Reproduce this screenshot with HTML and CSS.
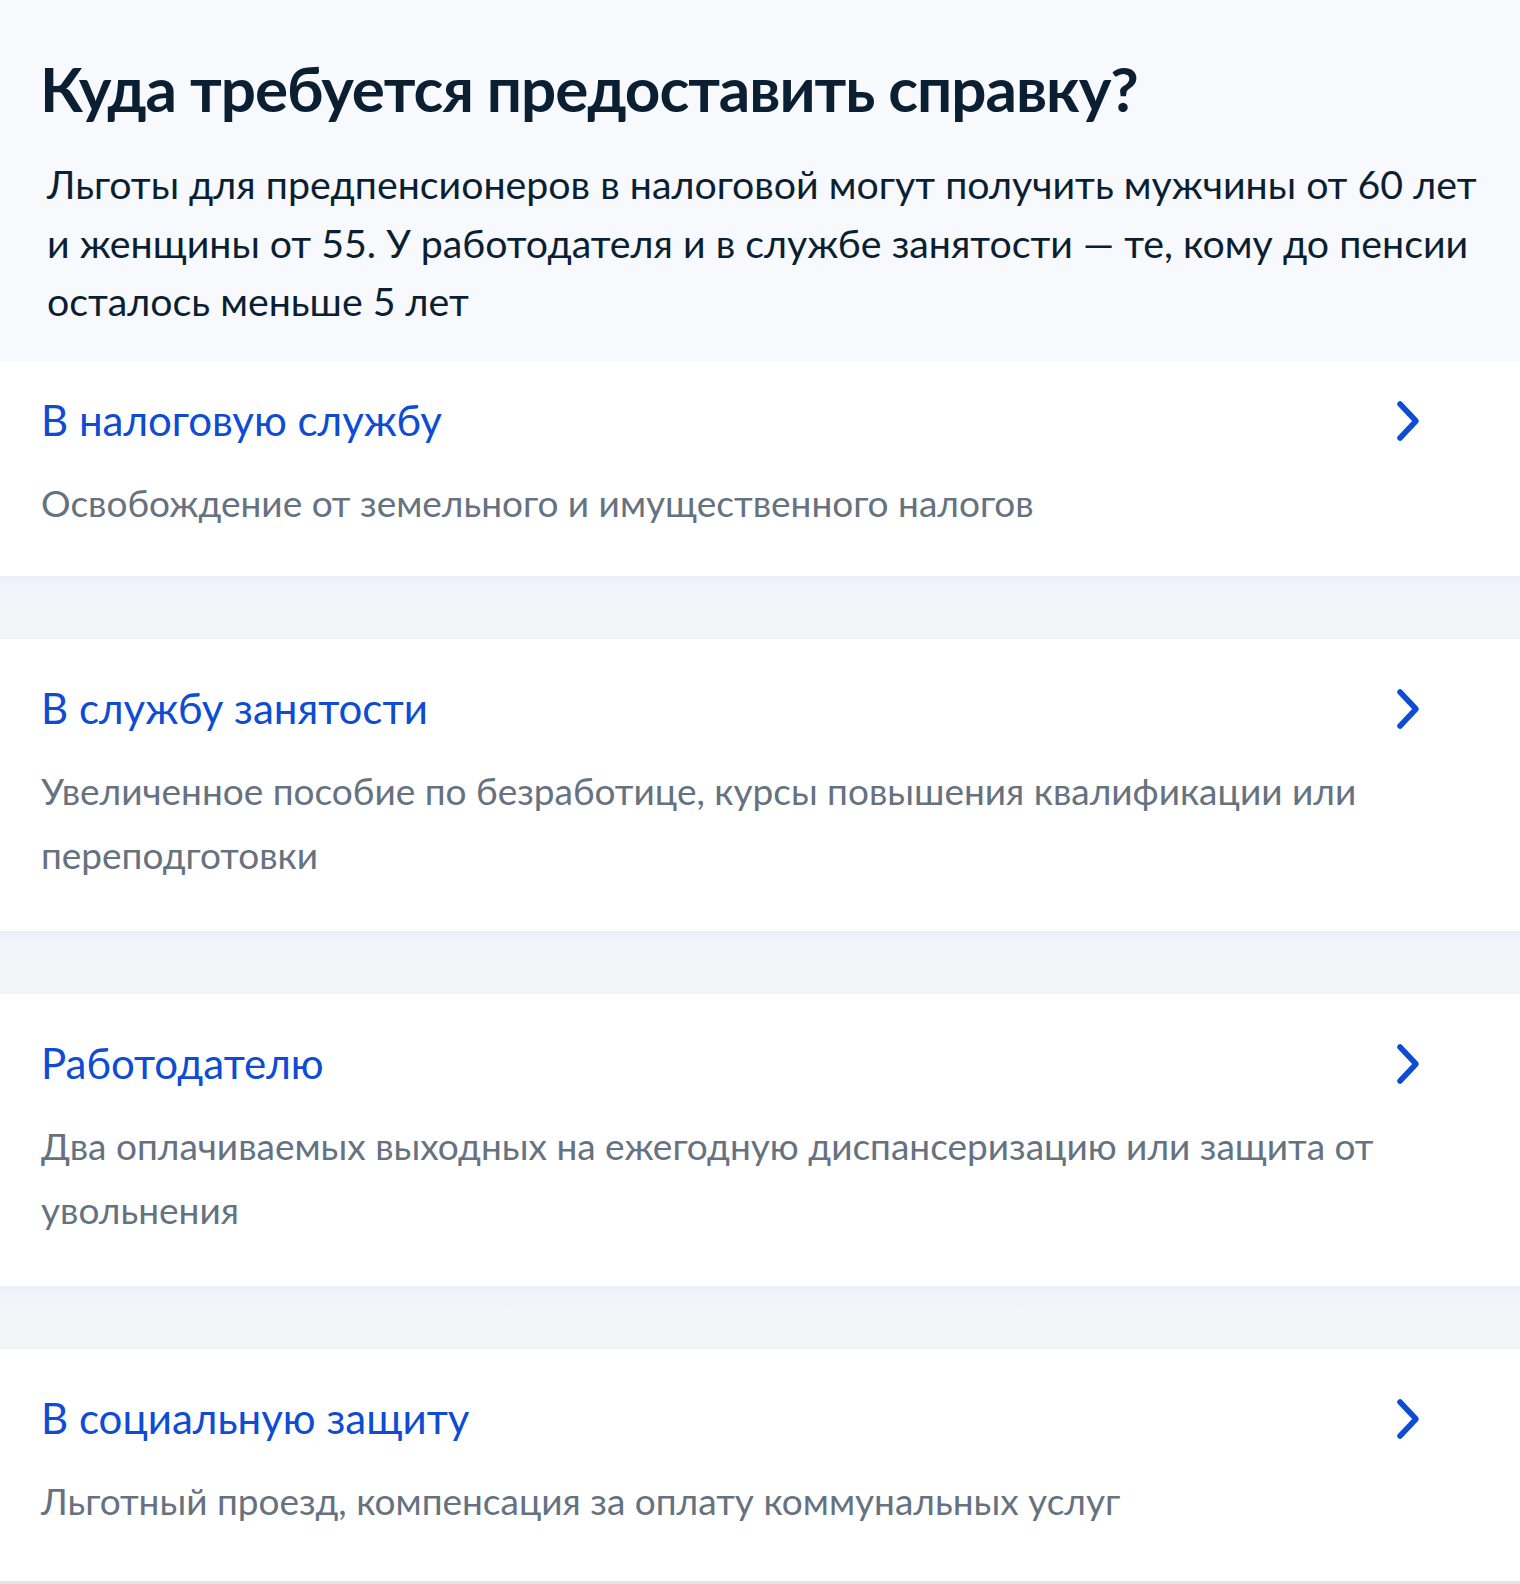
FILE: index.html
```html
<!DOCTYPE html>
<html lang="ru">
<head>
<meta charset="utf-8">
<title>Куда требуется предоставить справку?</title>
<link rel="stylesheet" href="styles.css">
</head>
<body>
<main class="page">
  <section class="intro">
    <h1 class="intro__title">Куда требуется предоставить справку?</h1>
    <p class="intro__text">Льготы для предпенсионеров в налоговой могут получить мужчины от 60 лет и женщины от 55. У работодателя и в службе занятости — те, кому до пенсии осталось меньше 5 лет</p>
  </section>

  <div class="list">
    <a class="card card--first" href="#">
      <div class="card__head">
        <span class="card__title">В налоговую службу</span>
        <svg class="card__chevron" viewBox="0 0 24 42" width="24" height="42" aria-hidden="true"><path d="M4 4 L20 21 L4 38" fill="none" stroke="#0D4CD3" stroke-width="5.5" stroke-linecap="round" stroke-linejoin="round"/></svg>
      </div>
      <p class="card__text">Освобождение от земельного и имущественного налогов</p>
    </a>
    <div class="gap"></div>
    <a class="card" href="#">
      <div class="card__head">
        <span class="card__title">В службу занятости</span>
        <svg class="card__chevron" viewBox="0 0 24 42" width="24" height="42" aria-hidden="true"><path d="M4 4 L20 21 L4 38" fill="none" stroke="#0D4CD3" stroke-width="5.5" stroke-linecap="round" stroke-linejoin="round"/></svg>
      </div>
      <p class="card__text">Увеличенное пособие по безработице, курсы повышения квалификации или переподготовки</p>
    </a>
    <div class="gap"></div>
    <a class="card" href="#">
      <div class="card__head">
        <span class="card__title">Работодателю</span>
        <svg class="card__chevron" viewBox="0 0 24 42" width="24" height="42" aria-hidden="true"><path d="M4 4 L20 21 L4 38" fill="none" stroke="#0D4CD3" stroke-width="5.5" stroke-linecap="round" stroke-linejoin="round"/></svg>
      </div>
      <p class="card__text">Два оплачиваемых выходных на ежегодную диспансеризацию или защита от увольнения</p>
    </a>
    <div class="gap"></div>
    <a class="card card--last" href="#">
      <div class="card__head">
        <span class="card__title">В социальную защиту</span>
        <svg class="card__chevron" viewBox="0 0 24 42" width="24" height="42" aria-hidden="true"><path d="M4 4 L20 21 L4 38" fill="none" stroke="#0D4CD3" stroke-width="5.5" stroke-linecap="round" stroke-linejoin="round"/></svg>
      </div>
      <p class="card__text">Льготный проезд, компенсация за оплату коммунальных услуг</p>
    </a>
    <div class="bottom-line"></div>
  </div>
</main>
</body>
</html>
```

FILE: styles.css
```css
* { box-sizing: border-box; }

html, body {
  margin: 0;
  padding: 0;
  background: #ffffff;
}

body {
  font-family: Lato, "Noto Sans", "Liberation Sans", sans-serif;
  color: #0B1F33;
}

.page {
  width: 1520px;
}

.intro {
  background: #F8F9FD;
  padding: 52px 40px 20px 40px;
  height: 361px;
}

.intro__title {
  margin: 0;
  font-size: 62px;
  line-height: 72px;
  font-weight: 700;
  color: #0B1F33;
  letter-spacing: -1.05px;
}

.intro__text {
  margin: 31px 0 0 7px;
  font-size: 39.3px;
  line-height: 58.5px;
  font-weight: 400;
  color: #0B1F33;
}

.list {
  display: flex;
  flex-direction: column;
}

.card {
  display: block;
  text-decoration: none;
  background: #ffffff;
  padding: 44.5px 102px 44px 41px;
}

.card--first {
  padding-top: 34.5px;
  padding-bottom: 41px;
}

.card--last {
  padding-bottom: 48px;
}

.card__head {
  display: flex;
  align-items: center;
  justify-content: space-between;
}

.card__title {
  font-size: 42px;
  line-height: 48px;
  color: #0D4CD3;
  font-weight: 400;
}

.card__chevron {
  display: block;
  flex: none;
  margin-right: -2px;
  margin-top: 3px;
}

.card__text {
  margin: 27.5px 0 0 0;
  font-size: 37px;
  line-height: 64px;
  color: #66727F;
  padding-right: 10px;
}

.gap {
  height: 63px;
  background: linear-gradient(#EAEFFA 0, #F0F3FA 8px, #F3F5FA 40%, #F3F5F9 100%);
  border-bottom: 1px solid #EEF2F8;
}

.bottom-line {
  height: 3px;
  background: #E3E5E9;
}
```
